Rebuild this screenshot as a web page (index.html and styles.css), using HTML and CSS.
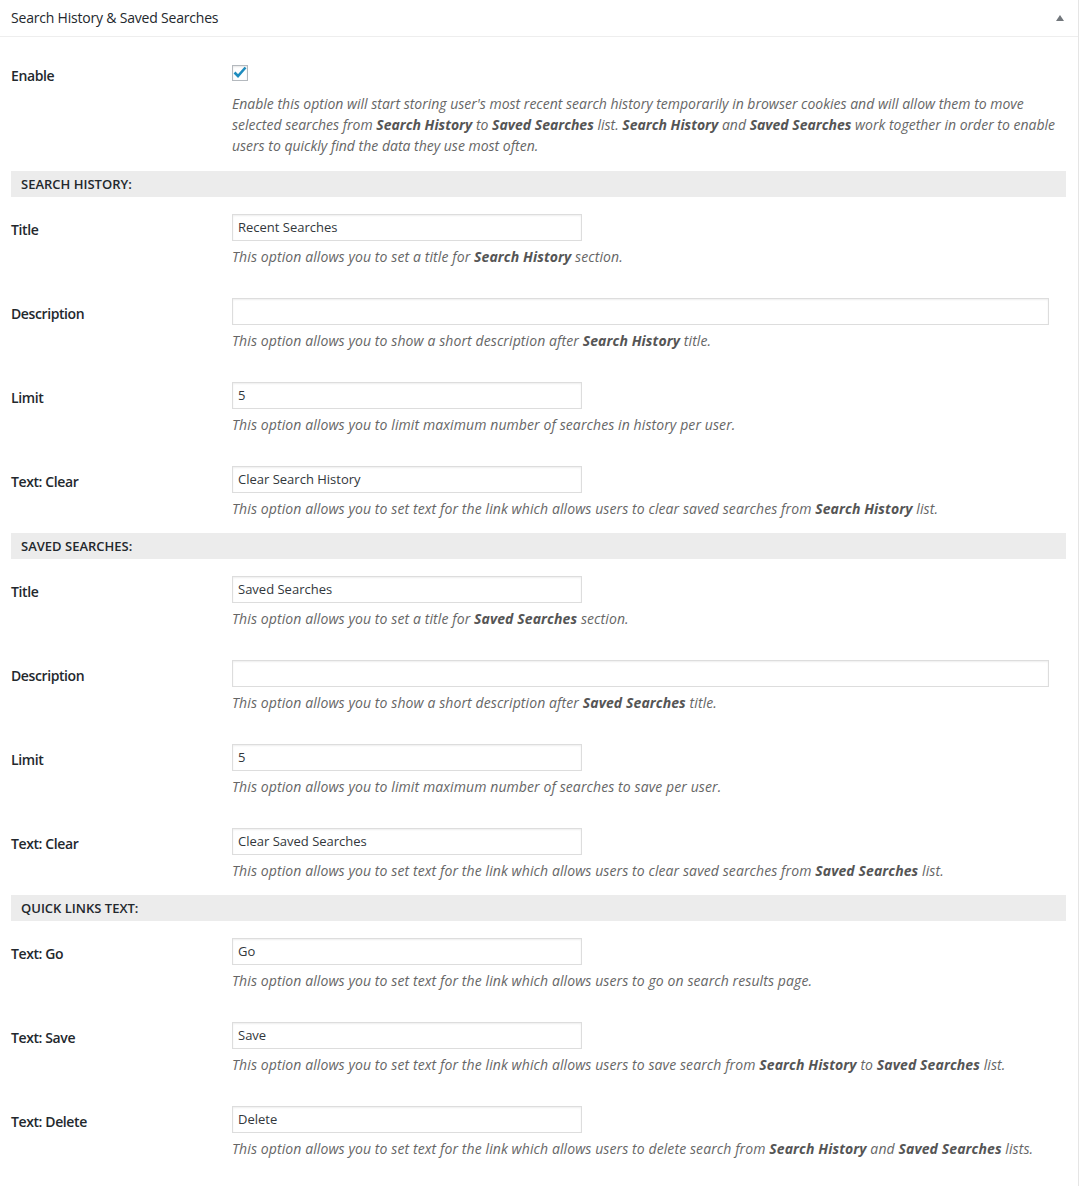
FILE: index.html
```html
<!DOCTYPE html>
<html lang="en">
<head>
<meta charset="utf-8">
<title>Search History &amp; Saved Searches</title>
<link rel="stylesheet" href="styles.css">
</head>
<body>
<div class="postbox">
  <div class="postbox-header">
    <h2 class="postbox-title">Search History &amp; Saved Searches</h2>
    <span class="toggle-arrow"></span>
  </div>
  <div class="inside">
    <div class="row row-enable">
      <div class="label label-enable">Enable</div>
      <div class="field">
        <span class="checkbox"><svg width="16" height="16" viewBox="0 0 16 16"><polyline points="2.5,7.5 6,11 13.5,2.5" fill="none" stroke="#1e8cbe" stroke-width="2.6" stroke-linecap="butt" stroke-linejoin="miter"/></svg></span>
        <p class="desc">Enable this option will start storing user's most recent search history temporarily in browser cookies and will allow them to move selected searches from <b>Search History</b> to <b>Saved Searches</b> list. <b>Search History</b> and <b>Saved Searches</b> work together in order to enable users to quickly find the data they use most often.</p>
      </div>
    </div>

    <div class="section">Search History:</div>
    <div class="row">
      <div class="label">Title</div>
      <div class="field"><div class="input">Recent Searches</div><p class="desc">This option allows you to set a title for <b>Search History</b> section.</p></div>
    </div>
    <div class="row">
      <div class="label">Description</div>
      <div class="field"><div class="input input-wide"></div><p class="desc">This option allows you to show a short description after <b>Search History</b> title.</p></div>
    </div>
    <div class="row">
      <div class="label">Limit</div>
      <div class="field"><div class="input">5</div><p class="desc">This option allows you to limit maximum number of searches in history per user.</p></div>
    </div>
    <div class="row">
      <div class="label">Text: Clear</div>
      <div class="field"><div class="input">Clear Search History</div><p class="desc">This option allows you to set text for the link which allows users to clear saved searches from <b>Search History</b> list.</p></div>
    </div>

    <div class="section">Saved Searches:</div>
    <div class="row">
      <div class="label">Title</div>
      <div class="field"><div class="input">Saved Searches</div><p class="desc">This option allows you to set a title for <b>Saved Searches</b> section.</p></div>
    </div>
    <div class="row">
      <div class="label">Description</div>
      <div class="field"><div class="input input-wide"></div><p class="desc">This option allows you to show a short description after <b>Saved Searches</b> title.</p></div>
    </div>
    <div class="row">
      <div class="label">Limit</div>
      <div class="field"><div class="input">5</div><p class="desc">This option allows you to limit maximum number of searches to save per user.</p></div>
    </div>
    <div class="row">
      <div class="label">Text: Clear</div>
      <div class="field"><div class="input">Clear Saved Searches</div><p class="desc">This option allows you to set text for the link which allows users to clear saved searches from <b>Saved Searches</b> list.</p></div>
    </div>

    <div class="section">Quick Links Text:</div>
    <div class="row">
      <div class="label">Text: Go</div>
      <div class="field"><div class="input">Go</div><p class="desc">This option allows you to set text for the link which allows users to go on search results page.</p></div>
    </div>
    <div class="row">
      <div class="label">Text: Save</div>
      <div class="field"><div class="input">Save</div><p class="desc">This option allows you to set text for the link which allows users to save search from <b>Search History</b> to <b>Saved Searches</b> list.</p></div>
    </div>
    <div class="row">
      <div class="label">Text: Delete</div>
      <div class="field"><div class="input">Delete</div><p class="desc">This option allows you to set text for the link which allows users to delete search from <b>Search History</b> and <b>Saved Searches</b> lists.</p></div>
    </div>
  </div>
</div>
</body>
</html>
```

FILE: styles.css
```css
* { box-sizing: border-box; }
body {
  margin: 0;
  background: #fff;
  font-family: "Open Sans", "Liberation Sans", sans-serif;
  font-size: 14px;
  color: #23282d;
}
.postbox {
  width: 1079px;
  border-right: 1px solid #e5e5e5;
  min-height: 1186px;
}
.postbox-header {
  display: flex;
  align-items: center;
  justify-content: space-between;
  height: 37px;
  border-bottom: 1px solid #eee;
  padding: 0 14px 0 11px;
}
.postbox-title {
  margin: 0;
  font-size: 14px;
  font-weight: 400;
  line-height: 20px;
  letter-spacing: -0.2px;
  color: #23282d;
}
.toggle-arrow {
  width: 0; height: 0;
  border-left: 4px solid transparent;
  border-right: 4px solid transparent;
  border-bottom: 6px solid #72777c;
  margin-top: -1px;
}
.inside { padding: 0 12px 0 11px; }
.row {
  display: grid;
  grid-template-columns: 221px 1fr;
  padding: 17px 0 14px;
}
.row-enable { padding: 28px 0 15px; }
.label {
  font-weight: 600;
  line-height: 18px;
  margin-top: 7px;
  letter-spacing: -0.4px;
  color: #23282d;
}
.label-enable { margin-top: 2px; }
.field { min-width: 0; }
.checkbox {
  display: block;
  width: 16px; height: 16px;
  border: 1px solid #b4b9be;
  background: #fff;
  box-shadow: inset 0 1px 2px rgba(0,0,0,.1);
  position: relative;
}
.checkbox svg { position: absolute; left: -1px; top: -1px; }
.input {
  width: 350px;
  height: 27px;
  border: 1px solid #ddd;
  box-shadow: inset 0 1px 2px rgba(0,0,0,.07);
  background: #fff;
  padding: 0 5px;
  line-height: 25px;
  color: #32373c;
  font-size: 13px;
}
.input-wide { width: 817px; }
.desc {
  margin: 5px 0 0;
  font-style: italic;
  color: #666;
  line-height: 21px;
  letter-spacing: 0.1px;
  padding-right: 10px;
}
.row-enable .desc { margin-top: 12px; letter-spacing: 0; }
.desc b { color: #555; font-weight: 700; }
.section {
  height: 26px;
  background: #ececec;
  padding: 0 10px;
  line-height: 26px;
  font-size: 13px;
  font-weight: 600;
  text-transform: uppercase;
  color: #23282d;
}
```
